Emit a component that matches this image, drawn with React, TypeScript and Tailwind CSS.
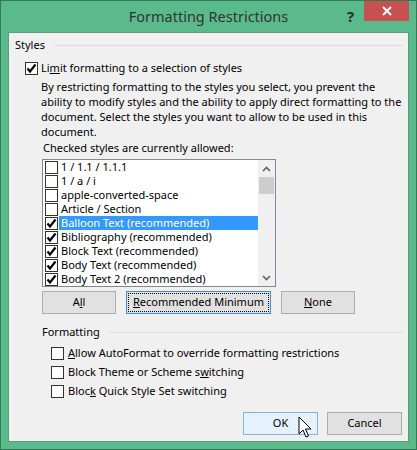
import React from 'react';

const font = { fontFamily: '"Segoe UI", "Noto Sans", sans-serif' };

const Check = () => (
  <svg width="11" height="11" viewBox="0 0 11 11" className="block">
    <path d="M1.5 5.5 L4 8.5 L9.5 1.5" fill="none" stroke="#000" strokeWidth="2.2" />
  </svg>
);

const Box = ({ checked = false, size = 13 }: { checked?: boolean; size?: number }) => (
  <div
    className="shrink-0 border border-[#333] bg-white flex items-center justify-center"
    style={{ width: size, height: size }}
  >
    {checked && <Check />}
  </div>
);

interface Style {
  name: string;
  checked: boolean;
  selected?: boolean;
}

const styles: Style[] = [
  { name: '1 / 1.1 / 1.1.1', checked: false },
  { name: '1 / a / i', checked: false },
  { name: 'apple-converted-space', checked: false },
  { name: 'Article / Section', checked: false },
  { name: 'Balloon Text (recommended)', checked: true, selected: true },
  { name: 'Bibliography (recommended)', checked: true },
  { name: 'Block Text (recommended)', checked: true },
  { name: 'Body Text (recommended)', checked: true },
  { name: 'Body Text 2 (recommended)', checked: true },
];

const Header = ({ label, indent }: { label: string; indent: string }) => (
  <div className={`flex items-center h-4 ${indent} pr-[5px]`}>
    <span className="text-[11px] leading-4 text-black">{label}</span>
    <div className="flex-1 h-px bg-[#dcdcdc] ml-[9px]" />
  </div>
);

const Btn = ({ children, w, focus = false, def = false }: { children: React.ReactNode; w: string; focus?: boolean; def?: boolean }) => (
  <div
    className={`${w} h-[23px] border flex items-center justify-center text-[11px] text-black whitespace-nowrap ${
      focus
        ? 'border-[#3c8fe0] bg-[#e1e1e1] p-[1px]'
        : def
        ? 'border-[#7eb4ea] bg-[#e5f1fb]'
        : 'border-[#adadad] bg-[#e1e1e1]'
    }`}
  >
    {focus ? (
      <div className="flex-1 self-stretch border border-dotted border-black flex items-center justify-center">{children}</div>
    ) : (
      children
    )}
  </div>
);

export default function App() {
  return (
    <div className="w-[417px] h-[450px] bg-[#5bba8c] border border-[#2f7a57] flex flex-col relative" style={font}>
      {/* title bar */}
      <div className="h-[31px] relative flex items-center justify-center">
        <span className="text-[14.5px] text-[#333] mt-[1px]">Formatting Restrictions</span>
        <span className="absolute left-[346px] top-[4px] text-[15px] font-bold text-[#2b2b2b]">?</span>
        <div className="absolute left-[363px] top-0 w-[45px] h-[20px] bg-[#c75050] flex items-center justify-center">
          <svg width="10" height="10" viewBox="0 0 10 10">
            <path d="M1 1 L9 9 M9 1 L1 9" stroke="#fff" strokeWidth="2" />
          </svg>
        </div>
      </div>

      {/* client area */}
      <div className="mx-[7px] h-[410px] border border-[#5f9a7c] bg-[#f0f0f0] flex flex-col text-black">
        <div className="pt-[4px]">
          <Header label="Styles" indent="pl-[6px]" />
        </div>

        <div className="flex items-center h-4 mt-[7px] pl-[16px]">
          <Box checked />
          <span className="ml-[3px] text-[11px] leading-4">
            Li<u>m</u>it formatting to a selection of styles
          </span>
        </div>

        <div className="pl-[32px] mt-[3px] text-[11px] leading-[15px] whitespace-nowrap">
          By restricting formatting to the styles you select, you prevent the
          <br />
          ability to modify styles and the ability to apply direct formatting to the
          <br />
          document. Select the styles you want to allow to be used in this
          <br />
          document.
        </div>

        <div className="pl-[34px] mt-[1px] text-[11px] leading-[15px]">Checked styles are currently allowed:</div>

        <div className="ml-[33px] mt-[4px] w-[234px] h-[128px] border border-[#828790] bg-white flex">
          <div className="flex-1 flex flex-col pl-[2px]">
            {styles.map((s) => (
              <div key={s.name} className="h-[14px] flex items-center">
                <Box checked={s.checked} />
                <div
                  className={`flex-1 h-[14px] ml-px pl-[2px] flex items-center text-[11px] leading-[14px] ${
                    s.selected ? 'bg-[#3399ff] text-white' : 'text-black'
                  }`}
                >
                  {s.name}
                </div>
              </div>
            ))}
          </div>
          <div className="w-[17px] bg-[#f0f0f0] flex flex-col items-center">
            <div className="h-[17px] flex items-center justify-center">
              <svg width="9" height="6" viewBox="0 0 9 6">
                <path d="M1 5 L4.5 1.5 L8 5" fill="none" stroke="#606060" strokeWidth="1.6" />
              </svg>
            </div>
            <div className="w-[15px] h-[17px] bg-[#cdcdcd]" />
            <div className="flex-1" />
            <div className="h-[17px] flex items-center justify-center">
              <svg width="9" height="6" viewBox="0 0 9 6">
                <path d="M1 1 L4.5 4.5 L8 1" fill="none" stroke="#606060" strokeWidth="1.6" />
              </svg>
            </div>
          </div>
        </div>

        <div className="flex mt-[4px] pl-[33px] gap-[10px]">
          <Btn w="w-[74px]">
            A<u>l</u>l
          </Btn>
          <Btn w="w-[145px]" focus>
            <u>R</u>ecommended Minimum
          </Btn>
          <Btn w="w-[74px]">
            <u>N</u>one
          </Btn>
        </div>

        <div className="mt-[10px]">
          <Header label="Formatting" indent="pl-[33px]" />
        </div>

        <div className="mt-[4px] pl-[42px] flex flex-col">
          <div className="h-[19px] flex items-center">
            <Box />
            <span className="ml-[4px] text-[11px]">
              <u>A</u>llow AutoFormat to override formatting restrictions
            </span>
          </div>
          <div className="h-[19px] flex items-center">
            <Box />
            <span className="ml-[4px] text-[11px]">
              Block Theme or Scheme s<u>w</u>itching
            </span>
          </div>
          <div className="h-[19px] flex items-center">
            <Box />
            <span className="ml-[4px] text-[11px]">
              Bloc<u>k</u> Quick Style Set switching
            </span>
          </div>
        </div>

        <div className="mt-[11px] flex justify-end gap-[9px] pr-[6px]">
          <Btn w="w-[75px]" def>
            OK
          </Btn>
          <Btn w="w-[75px]">Cancel</Btn>
        </div>
      </div>

      {/* mouse pointer */}
      <svg className="absolute left-[297px] top-[415px]" width="14" height="24" viewBox="0 0 14 24">
        <path d="M1 1 L1 18 L5 14 L8 21 L10.5 20 L7.5 13 L13 13 Z" fill="#fff" stroke="#000" strokeWidth="1" />
      </svg>
    </div>
  );
}
